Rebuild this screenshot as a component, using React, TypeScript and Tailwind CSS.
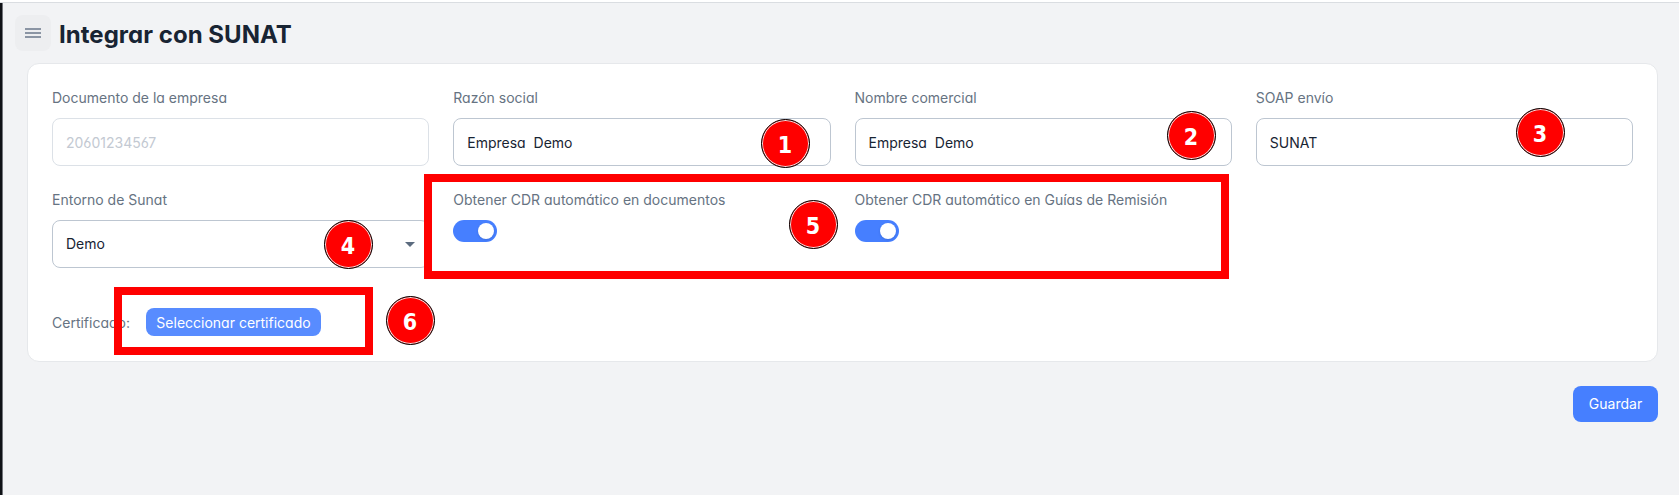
import type { ReactNode } from "react";

function Label({ children }: { children: ReactNode }) {
  return <span className="block text-sm leading-5 text-[#667382]">{children}</span>;
}

function Field({
  label,
  value,
  disabled = false,
  select = false,
  plain = false,
}: {
  label: string;
  value: string;
  disabled?: boolean;
  select?: boolean;
  plain?: boolean;
}) {
  return (
    <div className={plain ? "[font-feature-settings:normal]" : ""}>
      <Label>{label}</Label>
      <div
        className={`mt-[10px] flex h-12 items-center justify-between rounded-lg border bg-white px-[13px] text-sm ${
          disabled ? "border-[#dce1e7] text-[#c3c9d2]" : "border-[#bdc6d1] text-[#182433]"
        }`}
      >
        <span className={`whitespace-pre ${select ? "" : "pt-0.5"}`}>{value}</span>
        {select && (
          <svg width="10" height="5" viewBox="0 0 10 5" fill="#5b6b7f">
            <path d="M0 0h10L5 5z" />
          </svg>
        )}
      </div>
    </div>
  );
}

function Toggle({ label }: { label: string }) {
  return (
    <div>
      <Label>{label}</Label>
      <div className="mt-[10px] flex h-[22px] w-11 items-center justify-end rounded-full bg-[#467fff] pr-[3px]">
        <div className="size-4 rounded-full bg-white shadow-sm" />
      </div>
    </div>
  );
}

function Marker({ n, position }: { n: number; position: string }) {
  return (
    <div
      className={`absolute flex size-[49px] items-center justify-center rounded-full border border-black bg-[#ff0000] pt-[3px] pl-px font-['DejaVu_Sans'] text-[23px] leading-none font-bold text-white shadow-[inset_0_0_0_1px_#f3e0e0] ${position}`}
    >
      <span className="inline-block scale-x-90">{n}</span>
    </div>
  );
}

export default function App() {
  return (
    <div className="relative flex h-[495px] w-[1679px] flex-col overflow-hidden bg-white font-['Inter',sans-serif] [font-feature-settings:'cv03','cv04','cv11']">
      <div className="h-[3px] shrink-0 border-b border-[#dadde1]" />
      <div className="flex flex-1">
        <div className="w-[3px] shrink-0 border-r border-[#73757b] bg-[#101217]" />
        <main className="flex-1 bg-[#f2f3f5] pt-3 pr-[21px]">
          <header className="flex h-9 items-center pl-3">
            <button className="flex size-9 items-center justify-center rounded-lg bg-[#edeef0]">
              <svg width="16" height="10" viewBox="0 0 16 10" fill="#8b95a4">
                <path d="M0 0h16v2H0zM0 4h16v2H0zM0 8h16v2H0z" />
              </svg>
            </button>
            <h1 className="ml-2 pt-[3px] text-2xl leading-8 font-bold tracking-[0.03px] text-[#182433]">
              Integrar con SUNAT
            </h1>
          </header>

          <section className="mt-3 ml-6 h-[299px] rounded-xl border border-[#e6e8eb] bg-white px-6 pt-6">
            <div className="grid grid-cols-4 gap-x-6 gap-y-6">
              <Field label="Documento de la empresa" value="20601234567" disabled />
              <Field label="Razón social" value="Empresa  Demo" />
              <Field label="Nombre comercial" value="Empresa  Demo" />
              <Field label="SOAP envío" value="SUNAT" plain />
              <Field label="Entorno de Sunat" value="Demo" select />
              <Toggle label="Obtener CDR automático en documentos" />
              <Toggle label="Obtener CDR automático en Guías de Remisión" />
            </div>
            <div className="mt-10 flex items-center">
              <div className="pt-0.5">
                <Label>Certificado:</Label>
              </div>
              <button className="ml-4 h-7 w-[175px] rounded-lg bg-[#588cff] pt-px text-sm text-white">
                Seleccionar certificado
              </button>
            </div>
          </section>

          <div className="mt-6 flex justify-end">
            <button className="h-9 w-[85px] rounded-lg bg-[#467fff] text-sm text-white [font-feature-settings:normal]">
              Guardar
            </button>
          </div>
        </main>
      </div>

      <div className="absolute top-[174px] left-[424px] h-[105px] w-[805px] border-8 border-[#ff0000]" />
      <div className="absolute top-[287px] left-[114px] h-[68px] w-[259px] border-8 border-[#ff0000]" />
      <Marker n={1} position="left-[760.5px] top-[119px]" />
      <Marker n={2} position="left-[1166.5px] top-[111px]" />
      <Marker n={3} position="left-[1515.5px] top-[108px]" />
      <Marker n={4} position="left-[323.5px] top-[220px]" />
      <Marker n={5} position="left-[788.5px] top-[200px]" />
      <Marker n={6} position="left-[385.5px] top-[296px]" />
    </div>
  );
}
